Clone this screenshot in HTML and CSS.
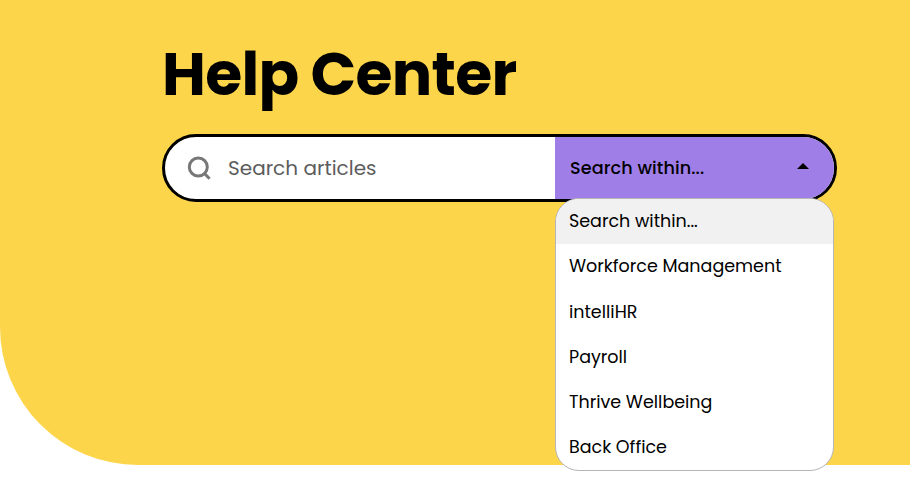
FILE: index.html
```html
<!DOCTYPE html>
<html lang="en">
<head>
  <meta charset="UTF-8" />
  <meta name="viewport" content="width=device-width, initial-scale=1.0"/>
  <title>Help Center</title>
  <link rel="stylesheet" href="styles.css">
</head>
<body>

  <section class="hero">
    <h1>Help Center</h1>

    <form class="search">
      <label class="search-field">
        <svg class="search-icon" viewBox="0 0 24 24" width="24" height="24">
          <circle cx="11.3" cy="11" r="9" />
          <path d="M17 17 L22.6 22.8" />
        </svg>
        <input type="text" placeholder="Search articles" />
      </label>

      <div class="filter">
        <button type="button" class="filter-toggle">
          <span>Search within...</span>
          <svg class="arrow" viewBox="0 0 12 6" width="12" height="6">
            <path d="M0 6 L6 0 L12 6 Z" />
          </svg>
        </button>
        <ul class="filter-menu">
          <li class="active">Search within...</li>
          <li>Workforce Management</li>
          <li>intelliHR</li>
          <li>Payroll</li>
          <li>Thrive Wellbeing</li>
          <li>Back Office</li>
        </ul>
      </div>
    </form>
  </section>

</body>
</html>
```

FILE: styles.css
```css
:root {
  --yellow: #fdd54a;
  --purple: #a07ee8;
  --text: #000000;
}

* {
  box-sizing: border-box;
}

body {
  margin: 0;
  min-height: 100vh;
  background-color: #ffffff;
  color: var(--text);
  font-family: Poppins, Inter, sans-serif;
}

.hero {
  height: 465px;
  padding: 38px 73px 0 162px;
  background-color: var(--yellow);
  border-bottom-left-radius: 138px;
}

h1 {
  margin: 0 0 24px;
  font-size: 60px;
  line-height: 72px;
  font-weight: 700;
  letter-spacing: -0.7px;
  white-space: nowrap;
}

.search {
  display: flex;
  height: 68px;
  background-color: #ffffff;
  border: 3px solid #000000;
  border-radius: 34px;
}

.search-field {
  display: flex;
  flex: 1;
  align-items: center;
  gap: 17px;
  padding-left: 22px;
}

.search-icon {
  fill: none;
  stroke: #777777;
  stroke-width: 3;
}

.search-field input {
  width: 300px;
  padding: 0;
  border: none;
  outline: none;
  background: none;
  font-family: inherit;
  font-size: 20px;
}

.search-field input::placeholder {
  color: #5c5c5c;
  opacity: 1;
}

.filter {
  position: relative;
  width: 279px;
}

.filter-toggle {
  display: flex;
  align-items: center;
  justify-content: space-between;
  width: 100%;
  height: 100%;
  padding: 0 25px 0 15px;
  border: none;
  border-radius: 0 31px 31px 0;
  background-color: var(--purple);
  color: var(--text);
  font-family: inherit;
  font-size: 17.6px;
  font-weight: 500;
  letter-spacing: 0.1px;
}

.arrow {
  position: relative;
  top: -2px;
}

/* opens over the bottom edge of the search bar */
.filter-menu {
  position: absolute;
  top: 61px;
  left: 0;
  width: 279px;
  height: 273px;
  margin: 0;
  padding: 0;
  overflow: hidden;
  list-style: none;
  background-color: #ffffff;
  border: 1px solid #b5b5b5;
  border-radius: 24px;
}

.filter-menu li {
  height: 45.25px;
  padding-left: 13px;
  font-size: 17.5px;
  line-height: 44.8px;
}

.filter-menu .active {
  background-color: #f1f1f1;
}
```
